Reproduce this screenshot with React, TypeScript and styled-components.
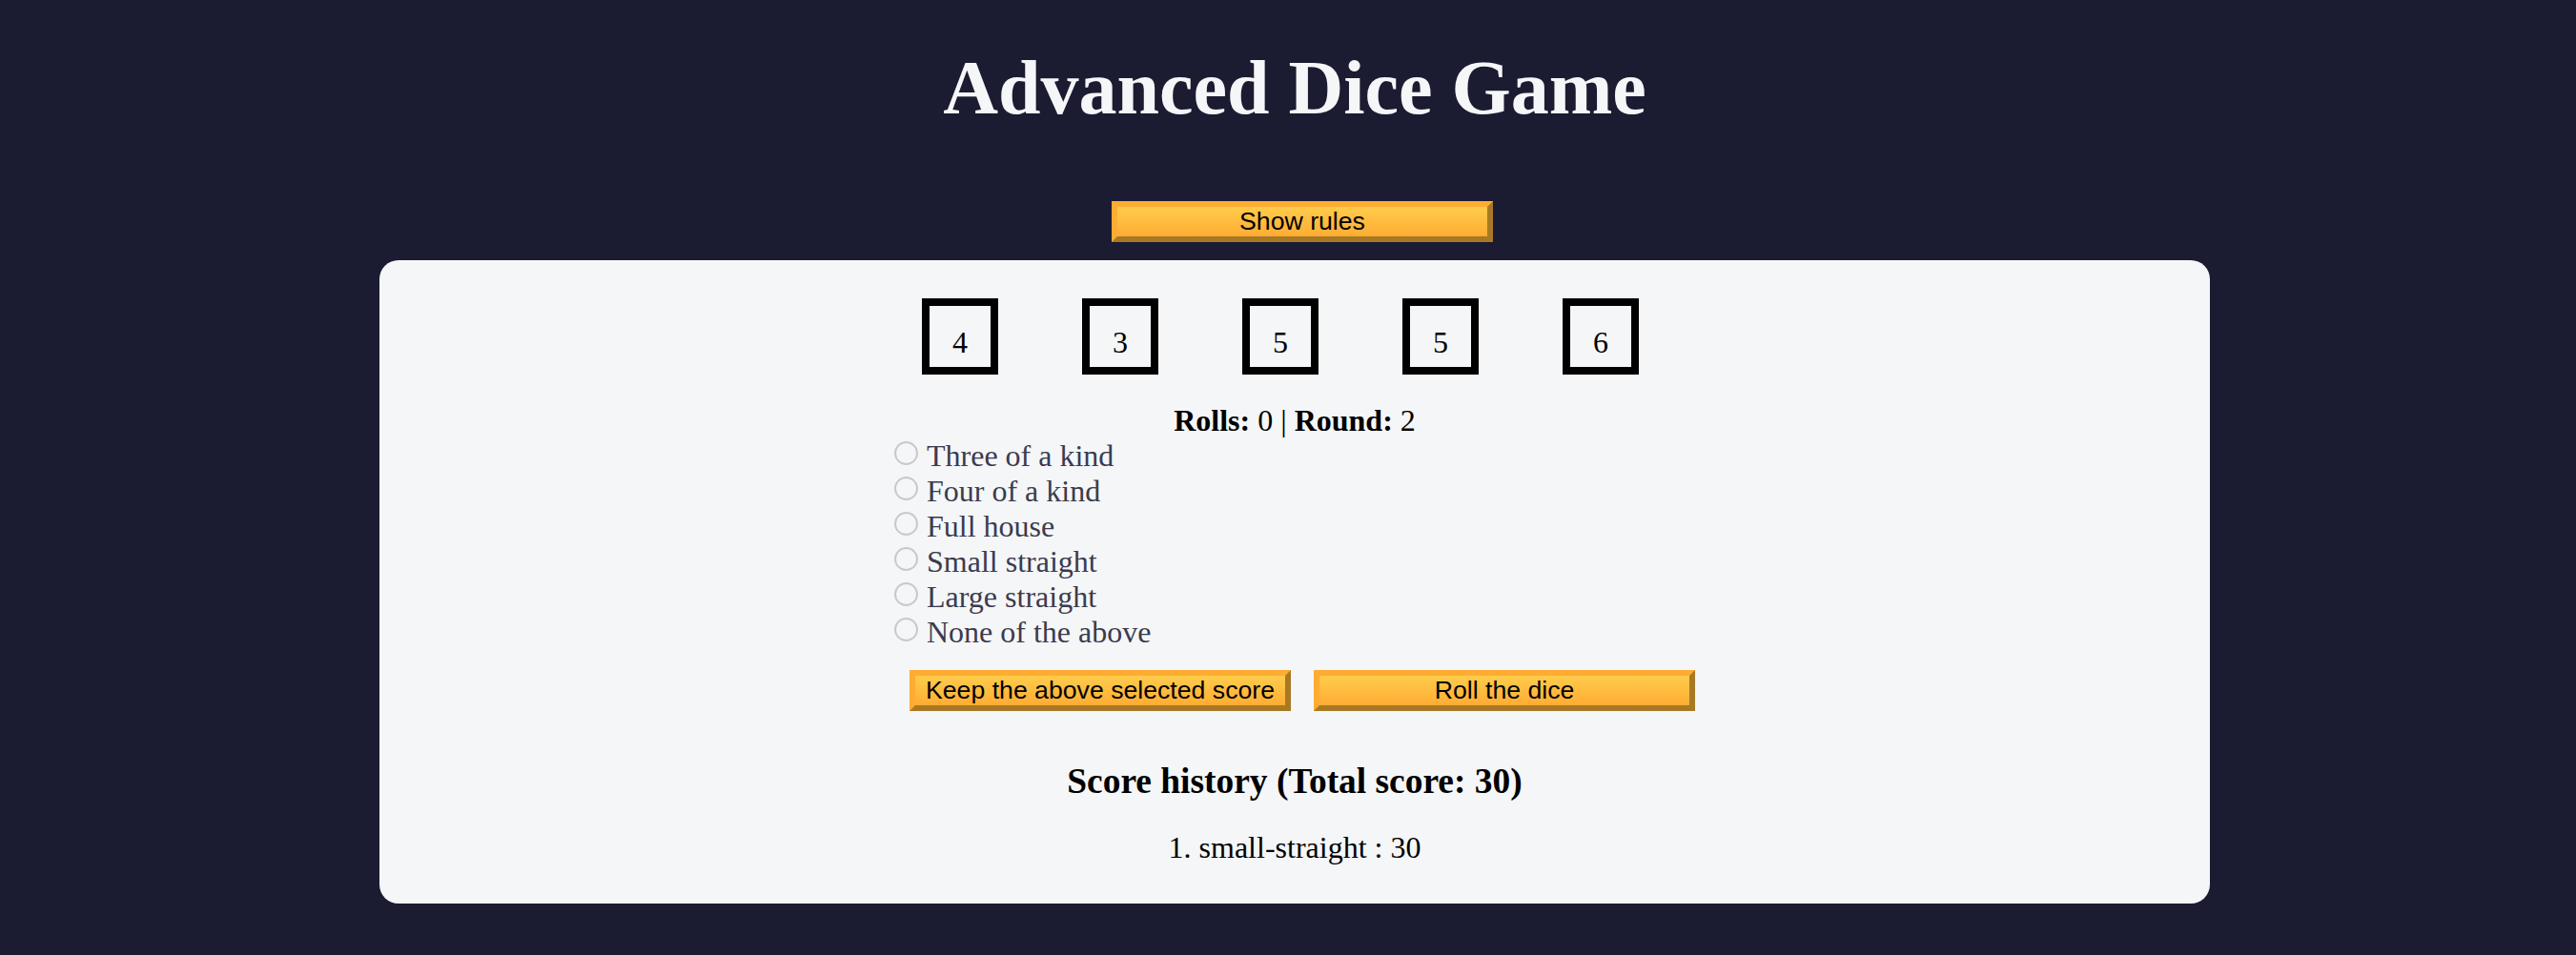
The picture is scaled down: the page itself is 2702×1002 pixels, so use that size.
import React from 'react';
import styled, { createGlobalStyle } from 'styled-components';

const GlobalStyle = createGlobalStyle`
  *,
  *::before,
  *::after {
    margin: 0;
    padding: 0;
    box-sizing: border-box;
  }

  html,
  body {
    background-color: #1b1b32;
  }

  body {
    font-family: 'Liberation Serif', 'Times New Roman', serif;
  }
`;

const Page = styled.div`
  padding: 0 0 20px 14px;
`;

const Header = styled.header`
  color: #f5f6f7;
  text-align: center;
`;

const Title = styled.h1`
  font-size: 80px;
  font-weight: 700;
  line-height: normal;
  margin: 47px 0 50px;
`;

const RulesRow = styled.div`
  display: flex;
  justify-content: center;
`;

const Button = styled.button<{ $top?: number }>`
  width: 400px;
  height: 43px;
  margin: ${(p) => p.$top ?? 0}px 0 0 16px;
  padding: 0;
  font-family: 'Liberation Sans', Arial, sans-serif;
  font-size: 26.67px;
  line-height: normal;
  color: #000;
  cursor: pointer;
  background-color: #feac32;
  background-image: linear-gradient(#fecc4c, #ffac33);
  border-width: 6px;
  border-style: solid;
  border-color: #feac32 #a87924 #a87924 #feac32;
`;

const Panel = styled.main`
  width: 1920px;
  margin: 19px auto 0;
  padding: 20px 0 40px;
  background-color: #f5f6f7;
  border-radius: 20px;
`;

const Column = styled.div`
  width: 840px;
  margin: 0 auto;
  text-align: center;
  color: #000;
`;

const DiceRow = styled.div`
  display: flex;
  justify-content: space-around;
  margin-bottom: 30px;
`;

const Die = styled.div`
  width: 80px;
  height: 80px;
  margin: 20px 30px 0 0;
  padding: 20px;
  border: 8px solid #000;
  font-size: 32px;
  line-height: normal;
  text-align: center;
`;

const RoundsText = styled.p`
  font-size: 32px;
  line-height: normal;
`;

const Options = styled.div`
  text-align: left;
`;

const Option = styled.div`
  display: flex;
  align-items: flex-start;
`;

const Radio = styled.input`
  appearance: none;
  width: 25px;
  height: 25px;
  margin: 3px 9px 0 0;
  border: 2px solid #c9c9cb;
  border-radius: 50%;
  background: transparent;
  flex-shrink: 0;
`;

const OptionLabel = styled.label`
  font-size: 32px;
  line-height: normal;
  color: #3b3b4f;
`;

const ButtonRow = styled.div`
  display: flex;
  justify-content: center;
  gap: 8px;
  margin-top: 21px;
`;

const HistoryTitle = styled.h3`
  font-size: 37.44px;
  font-weight: 700;
  line-height: normal;
  margin-top: 52px;
`;

const HistoryList = styled.ol`
  list-style: none;
  margin-top: 30px;
`;

const HistoryItem = styled.li`
  font-size: 32px;
  line-height: normal;
`;

const dice = [4, 3, 5, 5, 6];

const scoreOptions = [
  { id: 'three-of-a-kind', label: 'Three of a kind' },
  { id: 'four-of-a-kind', label: 'Four of a kind' },
  { id: 'full-house', label: 'Full house' },
  { id: 'small-straight', label: 'Small straight' },
  { id: 'large-straight', label: 'Large straight' },
  { id: 'none', label: 'None of the above' },
];

const history = [{ name: 'small-straight', score: 30 }];

export default function App() {
  const total = history.reduce((sum, h) => sum + h.score, 0);

  return (
    <Page>
      <GlobalStyle />
      <Header>
        <Title>Advanced Dice Game</Title>
      </Header>

      <RulesRow>
        <Button $top={23} type="button">
          Show rules
        </Button>
      </RulesRow>

      <Panel>
        <Column>
          <DiceRow>
            {dice.map((value, i) => (
              <Die key={i}>{value}</Die>
            ))}
          </DiceRow>

          <RoundsText>
            <strong>Rolls:</strong> 0 | <strong>Round:</strong> 2
          </RoundsText>

          <Options>
            {scoreOptions.map((opt) => (
              <Option key={opt.id}>
                <Radio type="radio" name="score" id={opt.id} disabled />
                <OptionLabel htmlFor={opt.id}>{opt.label}</OptionLabel>
              </Option>
            ))}
          </Options>

          <ButtonRow>
            <Button type="button">Keep the above selected score</Button>
            <Button type="button">Roll the dice</Button>
          </ButtonRow>

          <HistoryTitle>Score history (Total score: {total})</HistoryTitle>
          <HistoryList>
            {history.map((h, i) => (
              <HistoryItem key={i}>
                {i + 1}. {h.name} : {h.score}
              </HistoryItem>
            ))}
          </HistoryList>
        </Column>
      </Panel>
    </Page>
  );
}
